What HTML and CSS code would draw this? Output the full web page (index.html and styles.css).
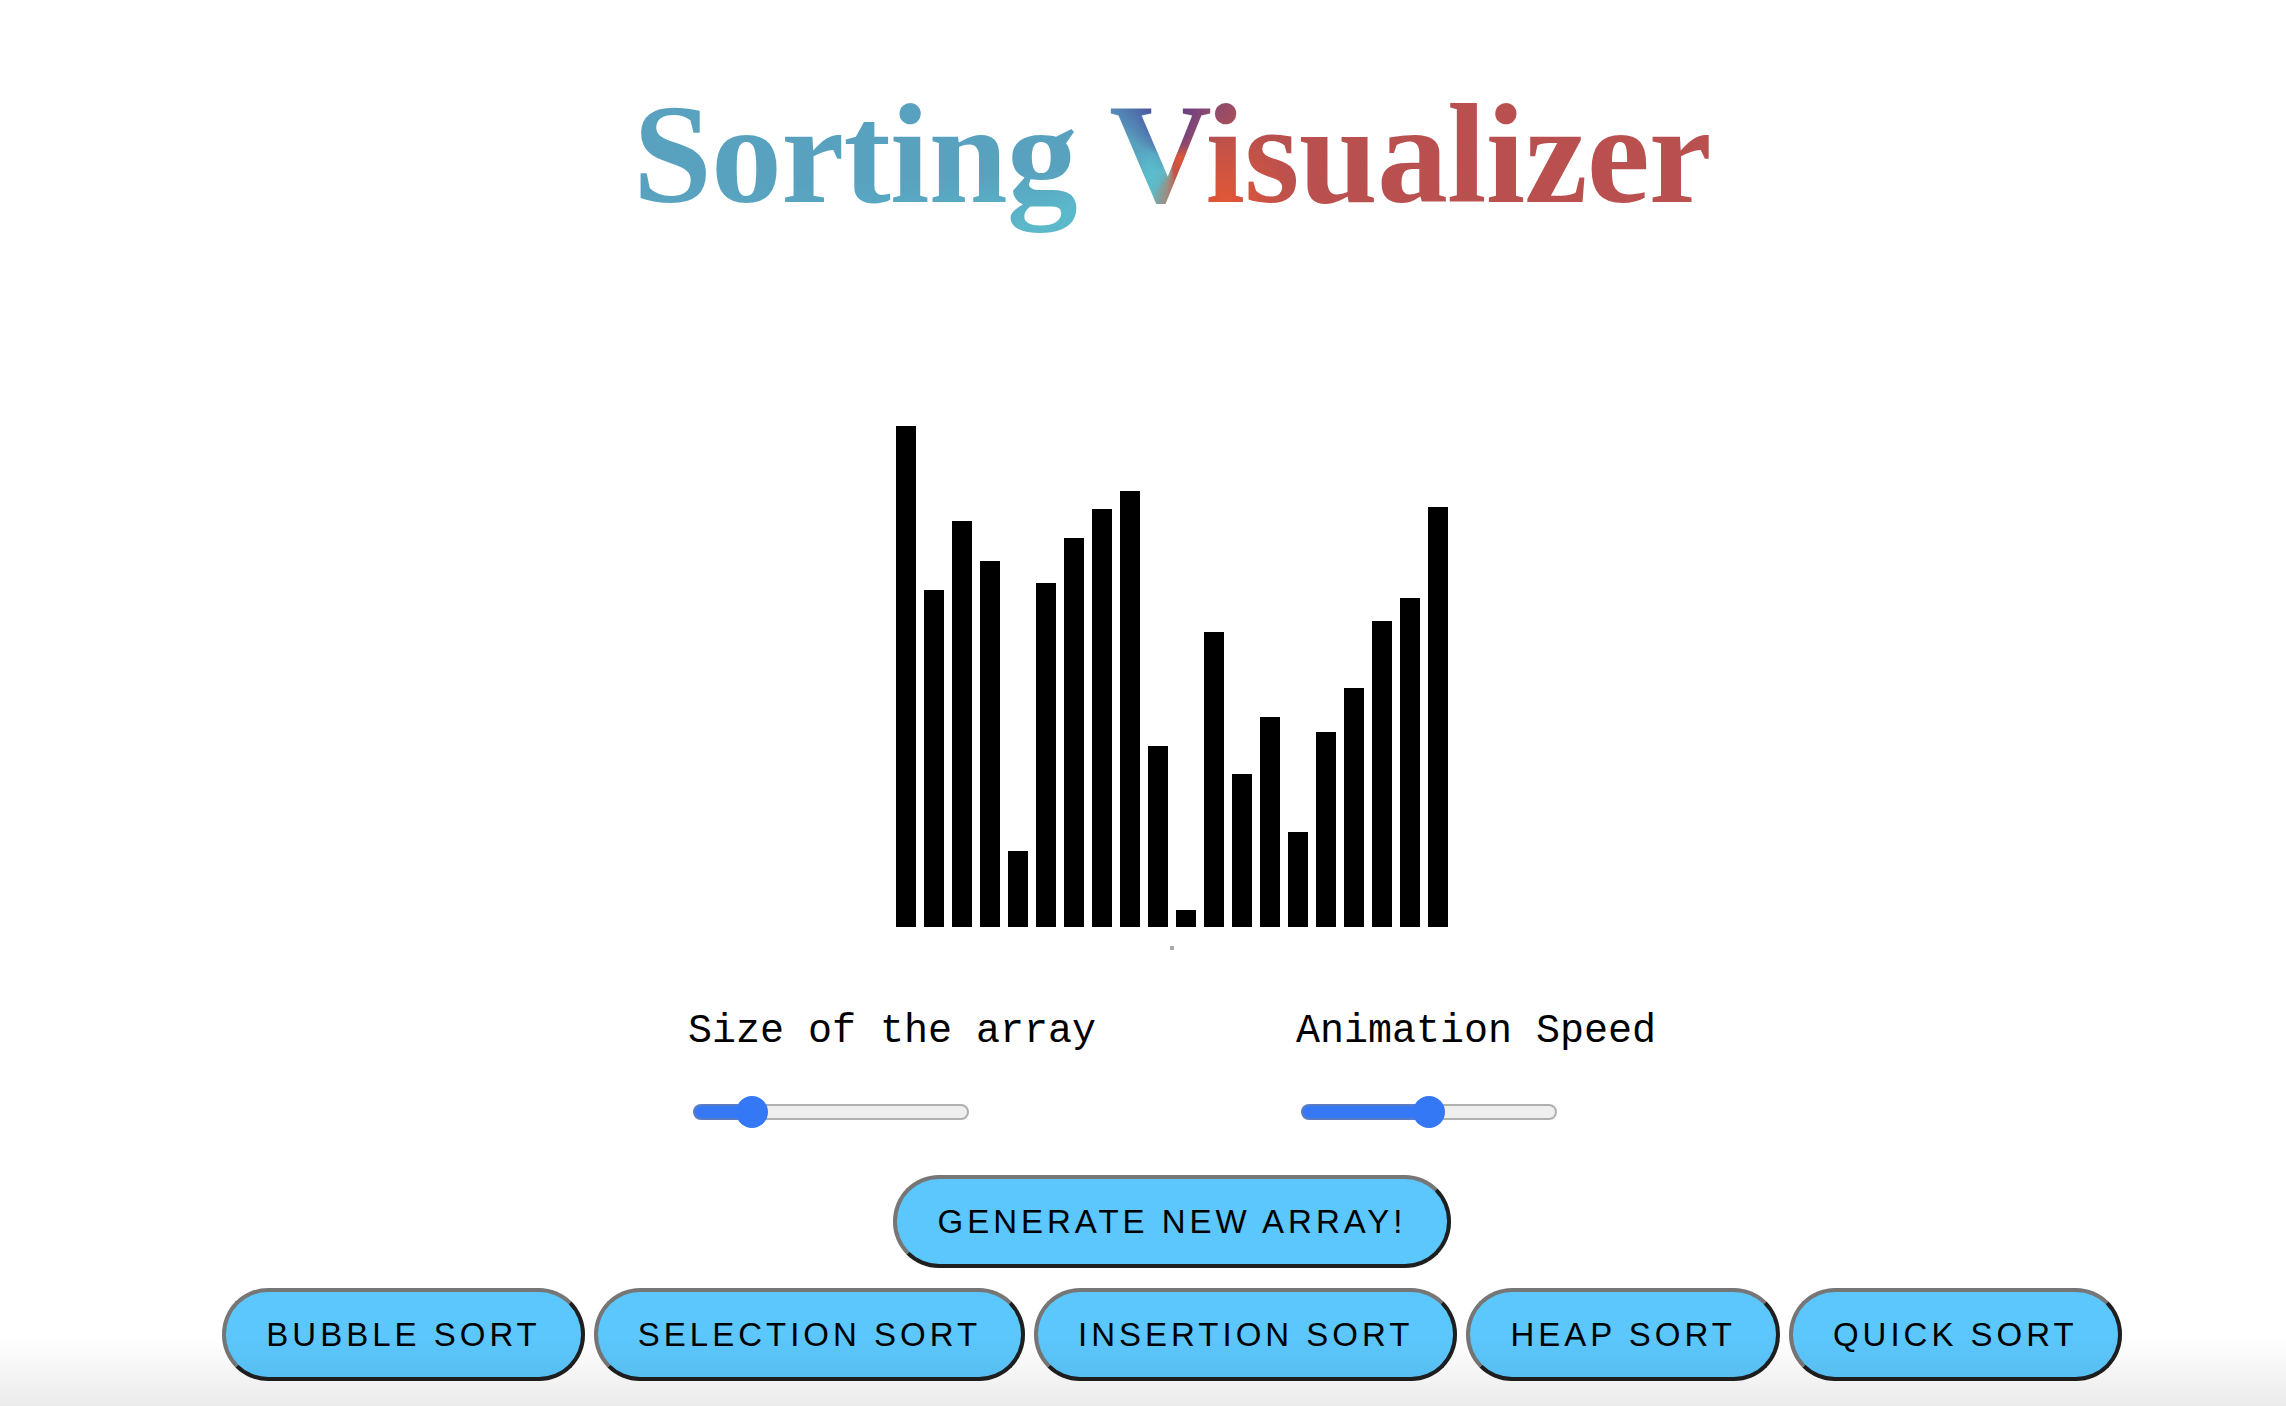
FILE: index.html
```html
<!DOCTYPE html>
<html lang="en">
<head>
  <meta charset="UTF-8" />
  <title>Sorting Visualizer</title>
  <link rel="stylesheet" href="styles.css">
</head>
<body>
  <h1 class="title">Sorting Visualizer</h1>

  <div class="chart">
    <div class="bar" style="height: 501px"></div>
    <div class="bar" style="height: 337px"></div>
    <div class="bar" style="height: 406px"></div>
    <div class="bar" style="height: 366px"></div>
    <div class="bar" style="height: 76px"></div>
    <div class="bar" style="height: 344px"></div>
    <div class="bar" style="height: 389px"></div>
    <div class="bar" style="height: 418px"></div>
    <div class="bar" style="height: 436px"></div>
    <div class="bar" style="height: 181px"></div>
    <div class="bar" style="height: 17px"></div>
    <div class="bar" style="height: 295px"></div>
    <div class="bar" style="height: 153px"></div>
    <div class="bar" style="height: 210px"></div>
    <div class="bar" style="height: 95px"></div>
    <div class="bar" style="height: 195px"></div>
    <div class="bar" style="height: 239px"></div>
    <div class="bar" style="height: 306px"></div>
    <div class="bar" style="height: 329px"></div>
    <div class="bar" style="height: 420px"></div>
  </div>
  <div class="speck"></div>

  <div class="controls">
    <div class="control control-size">
      <label for="size">Size of the array</label>
      <input id="size" class="slider slider-size" type="range" min="0" max="100" value="17">
    </div>
    <div class="control control-speed">
      <label for="speed">Animation Speed</label>
      <input id="speed" class="slider slider-speed" type="range" min="0" max="100" value="50">
    </div>
  </div>

  <div class="buttons">
    <button class="btn">Generate New Array!</button>
  </div>
  <div class="buttons buttons-sort">
    <button class="btn">Bubble Sort</button>
    <button class="btn">Selection Sort</button>
    <button class="btn">Insertion Sort</button>
    <button class="btn">Heap Sort</button>
    <button class="btn">Quick Sort</button>
  </div>

  <div class="fade"></div>
</body>
</html>
```

FILE: styles.css
```css
* { box-sizing: border-box; }

html, body {
  margin: 0;
  height: 100%;
  background: #fff;
  overflow: hidden;
}

body {
  padding-left: 58px;
  position: relative;
}

.title {
  margin: 0;
  padding-top: 64px;
  height: 426px;
  text-align: center;
  font-family: "Liberation Serif", serif;
  font-weight: bold;
  font-size: 142px;
  letter-spacing: -0.8px;
  line-height: 180px;
}

.title {
  background-image:
    radial-gradient(circle 14px at 1179px 158px, rgba(228, 88, 52, 0.95), rgba(228, 88, 52, 0) 100%),
    radial-gradient(circle 22px at 1150px 168px, rgba(91, 190, 205, 0.9), rgba(91, 190, 205, 0) 100%),
    radial-gradient(circle 75px at 1225px 200px, rgba(228, 88, 52, 0.9), rgba(228, 88, 52, 0) 100%),
    conic-gradient(from 0deg at 1172px 165px,
      #5a3a8e 0deg, #8a4a70 35deg, #b8504f 65deg, #bc524f 165deg,
      #8c9a94 190deg, #5bbccb 215deg, #5bb8ca 248deg, #58a1bf 268deg, #58a1bf 300deg,
      #4d5fa5 335deg, #5a3a8e 360deg);
  background-size: 2286px 426px;
  background-position: -58px 0;
  background-clip: text;
  -webkit-background-clip: text;
  color: transparent;
}

.chart {
  display: flex;
  justify-content: center;
  align-items: flex-end;
  gap: 8px;
  height: 501px;
}

.bar {
  width: 20px;
  background: #000;
}

.speck {
  width: 4px;
  height: 4px;
  margin: 19px auto 0;
  background: #aaa;
}

.controls {
  display: flex;
  justify-content: center;
  gap: 200px;
  margin-top: 59px;
  height: 166px;
}

.control {
  display: flex;
  flex-direction: column;
}

.control label {
  font-family: "Liberation Mono", monospace;
  font-size: 40px;
  line-height: 46px;
}

.slider {
  appearance: none;
  -webkit-appearance: none;
  height: 32px;
  margin: 41px 0 0 5px;
  background: transparent;
  cursor: pointer;
}

.slider-size { width: 276px; }
.slider-speed { width: 256px; }

.slider::-webkit-slider-runnable-track {
  height: 16px;
  border: 2px solid transparent;
  border-radius: 8px;
}

.slider-size::-webkit-slider-runnable-track {
  background:
    linear-gradient(to right, #3478f6 56px, #efefef 56px) padding-box,
    linear-gradient(to right, #5a7cc0 58px, #b0b0b0 58px) border-box;
}

.slider-speed::-webkit-slider-runnable-track {
  background:
    linear-gradient(to right, #3478f6 127px, #efefef 127px) padding-box,
    linear-gradient(to right, #5a7cc0 129px, #b0b0b0 129px) border-box;
}

.slider::-webkit-slider-thumb {
  -webkit-appearance: none;
  width: 32px;
  height: 32px;
  margin-top: -10px;
  border-radius: 50%;
  background: #3478f6;
}

.buttons {
  display: flex;
  justify-content: center;
  gap: 9px;
}

.buttons-sort {
  margin-top: 20px;
}

.btn {
  height: 93px;
  padding: 0 40px;
  font-family: "Liberation Sans", Arial, sans-serif;
  font-size: 33px;
  letter-spacing: 4px;
  text-transform: uppercase;
  color: #000;
  background: #5cc7fc;
  border: 4px solid;
  border-color: #767676 #1f1f1f #1f1f1f #767676;
  border-radius: 46px;
}

.fade {
  position: absolute;
  left: 0;
  right: 0;
  bottom: 0;
  height: 70px;
  background: linear-gradient(to bottom, rgba(0, 0, 0, 0), rgba(0, 0, 0, 0.08));
  pointer-events: none;
}
```
